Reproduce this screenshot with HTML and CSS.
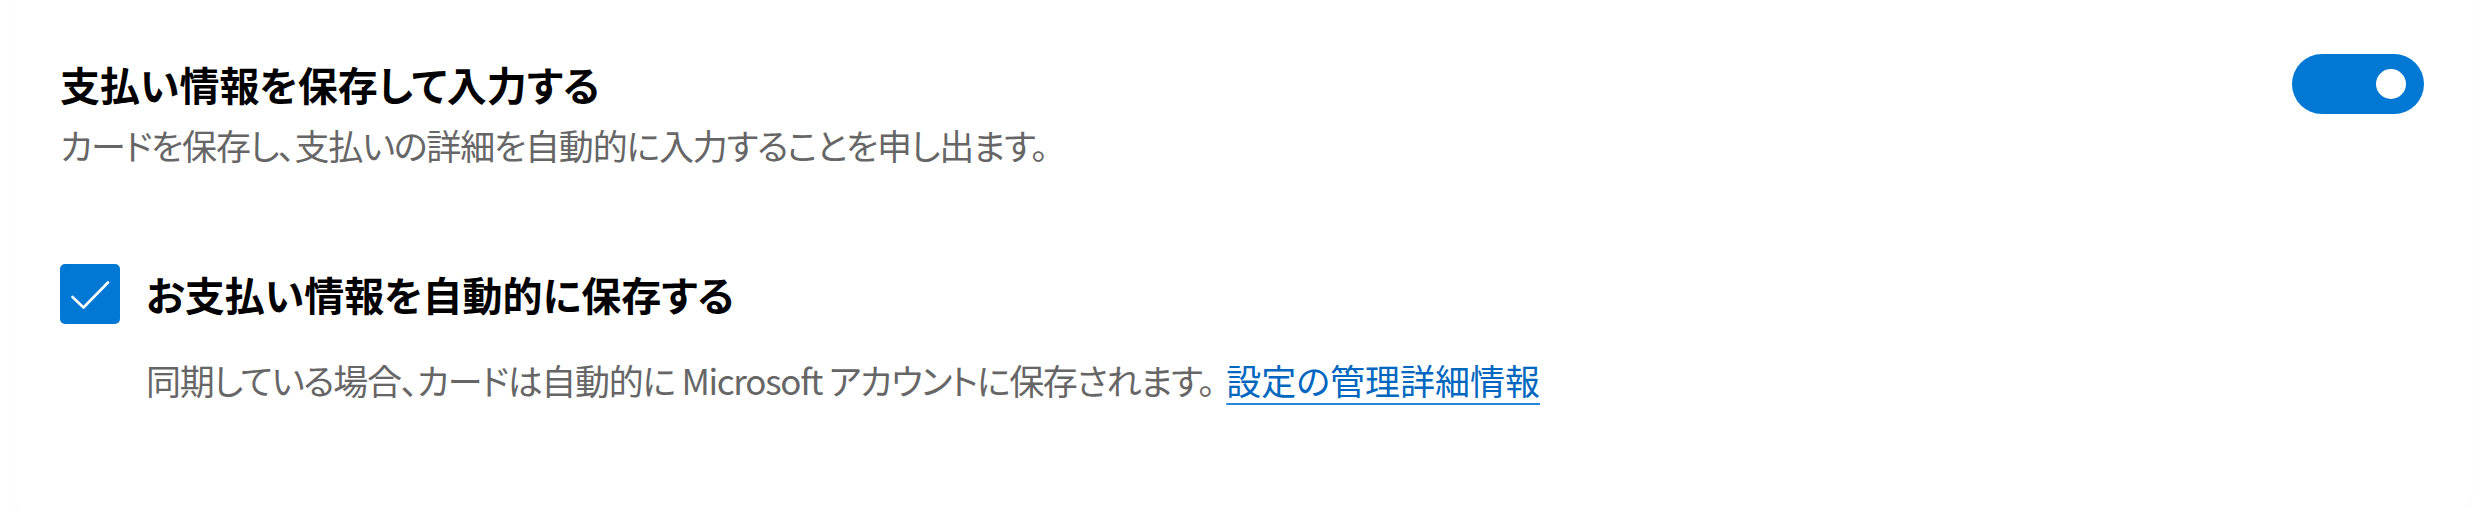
FILE: index.html
```html
<!DOCTYPE html>
<html lang="ja">
<head>
<meta charset="utf-8">
<title>支払い情報</title>
<link rel="stylesheet" href="styles.css">
</head>
<body>
<div class="page">
  <section class="card">
    <div class="setting">
      <div class="setting-head">
        <h2 class="title">支払い情報を保存して入力する</h2>
        <span class="toggle" role="switch" aria-checked="true"><span class="knob"></span></span>
      </div>
      <p class="desc">カードを保存し、支払いの詳細を自動的に入力することを申し出ます。</p>
    </div>
    <div class="check-row">
      <span class="checkbox" role="checkbox" aria-checked="true">
        <svg viewBox="0 0 60 60" width="60" height="60" aria-hidden="true"><path d="M12.5 33 L23.5 43.5 L48 18.5" fill="none" stroke="#fff" stroke-width="2.6" stroke-linecap="round" stroke-linejoin="round"/></svg>
      </span>
      <span class="check-label">お支払い情報を自動的に保存する</span>
    </div>
    <p class="sub">同期している場合、カードは自動的に Microsoft アカウントに保存されます。<a class="link" href="#">設定の管理詳細情報</a></p>
  </section>
</div>
</body>
</html>
```
FILE: styles.css
```css
html, body {
  margin: 0;
  padding: 0;
  background: #ffffff;
}
body {
  font-family: "Noto Sans CJK JP", "Noto Sans", sans-serif;
  font-feature-settings: "palt";
  color: #000;
}
.page {
  padding: 0 12px;
}
.card {
  background: #fff;
  border-radius: 0 0 12px 12px;
  box-shadow: 0 2px 3px rgba(0, 0, 0, 0.025);
  height: 508px;
  box-sizing: border-box;
  padding: 54px 48px 0 48px;
}
.setting-head {
  display: flex;
  align-items: center;
  justify-content: space-between;
}
.title {
  margin: 0;
  font-size: 40px;
  font-weight: 700;
  line-height: 60px;
  letter-spacing: 0;
}
.toggle {
  width: 132px;
  height: 60px;
  border-radius: 30px;
  background: #0078d4;
  display: flex;
  align-items: center;
  justify-content: flex-end;
  padding-right: 18px;
  box-sizing: border-box;
}
.knob {
  width: 30px;
  height: 30px;
  border-radius: 50%;
  background: #fff;
}
.desc {
  margin: 9px 0 0 0;
  font-size: 35px;
  line-height: 44px;
  color: #666666;
  letter-spacing: -1.2px;
}
.check-row {
  display: flex;
  align-items: center;
  gap: 26px;
  margin-top: 97px;
}
.checkbox {
  width: 60px;
  height: 60px;
  border-radius: 5px;
  background: #0078d4;
  display: flex;
  flex: none;
}
.check-label {
  font-size: 40px;
  font-weight: 700;
  line-height: 60px;
  letter-spacing: 0;
}
.sub {
  margin: 34px 0 0 86px;
  font-size: 35px;
  line-height: 44px;
  color: #666666;
  letter-spacing: -1.3px;
}
.link {
  margin-left: 12px;
  letter-spacing: 0;
  color: #0067c0;
  text-decoration: underline;
  text-decoration-color: #2b88d8;
  text-decoration-thickness: 2px;
  text-underline-offset: 8px;
}
```
